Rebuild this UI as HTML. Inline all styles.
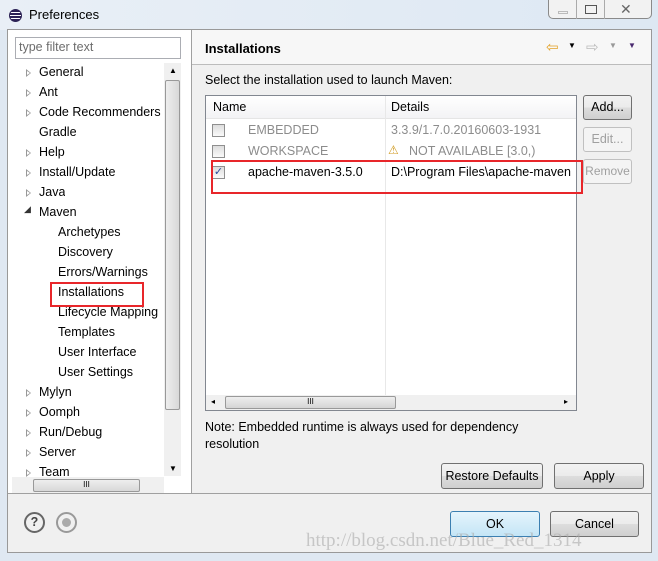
<!DOCTYPE html><html><head><style>
*{margin:0;padding:0;box-sizing:border-box}
body{width:658px;height:561px;background:#dfe8f2;font-family:"Liberation Sans",sans-serif;font-size:12.5px;color:#000;position:relative;overflow:hidden}
.a{position:absolute}
.btn{position:absolute;border:1px solid #707070;border-radius:3px;background:linear-gradient(#f2f2f2,#ebebeb 50%,#dddddd 51%,#cfcfcf);text-align:center;font-size:12.5px}
.dis{color:#a0a0a0;border-color:#c0c0c0;background:#f4f4f4}
.tri{position:absolute;width:0;height:0;border-left:5px solid #999;border-top:4px solid transparent;border-bottom:4px solid transparent}
.tri:after{content:"";position:absolute;left:-4px;top:-2px;border-left:3px solid #fff;border-top:2px solid transparent;border-bottom:2px solid transparent}
.cb{position:absolute;width:13px;height:13px;border:1px solid #8f8f8f;background:linear-gradient(#ddd,#fafafa)}
</style></head><body>
<div class="a" style="left:0;top:0;width:658px;height:30px;background:linear-gradient(90deg,#e9eff6,#dde8f3)"></div>
<div class="a" style="left:9px;top:9px;width:13px;height:13px;border-radius:50%;background:repeating-linear-gradient(#2c2255 0 2px,#fff 2px 3px);border:1px solid #2c2255"></div>
<div class="a" style="left:29px;top:7px;font-size:13px">Preferences</div>
<div class="a" style="left:548px;top:0;width:104px;height:19px;border:1px solid #8a8a8a;border-top:none;border-radius:0 0 5px 5px;background:#f2f2f2"></div>
<div class="a" style="left:576px;top:0;width:1px;height:19px;background:#aaa"></div>
<div class="a" style="left:604px;top:0;width:1px;height:19px;background:#aaa"></div>
<div class="a" style="left:558px;top:11px;width:10px;height:3px;border:1px solid #bbb"></div>
<div class="a" style="left:585px;top:5px;width:12px;height:9px;border:1px solid #555"></div>
<div class="a" style="left:620px;top:1px;font-size:14px;color:#666">✕</div>
<div class="a" style="left:7px;top:29px;width:645px;height:524px;background:#f0f0f0;border:1px solid #999"></div>
<div class="a" style="left:8px;top:30px;width:183px;height:463px;background:#fff"></div>
<div class="a" style="left:191px;top:30px;width:1px;height:464px;background:#a0a0a0"></div>
<div class="a" style="left:8px;top:493px;width:643px;height:1px;background:#a0a0a0"></div>
<div class="a" style="left:15px;top:37px;width:166px;height:22px;border:1px solid #abadb3;color:#6d6d6d;padding:2px 3px">type filter text</div>
<div class="a" style="left:164px;top:63px;width:17px;height:413px;background:#f0f0f0"></div>
<div class="a" style="left:165px;top:80px;width:15px;height:330px;border:1px solid #999;border-radius:2px;background:linear-gradient(90deg,#eee,#d8d8d8)"></div>
<div class="a" style="left:169px;top:66px;font-size:8px">▲</div>
<div class="a" style="left:169px;top:464px;font-size:8px">▼</div>
<div class="a" style="left:12px;top:477px;width:152px;height:16px;background:#f0f0f0"></div>
<div class="a" style="left:33px;top:479px;width:107px;height:13px;border:1px solid #999;border-radius:2px;background:linear-gradient(#eee,#d8d8d8);font-size:8px;text-align:center">III</div>
<div id="tree"></div>
<div class="a" style="left:50px;top:282px;width:94px;height:25px;border:2px solid #e8262a"></div>
<div class="a" style="left:192px;top:30px;width:459px;height:35px;background:#f7f7f7;border-bottom:1px solid #bcbcbc"></div>
<div class="a" style="left:205px;top:41px;font-weight:bold;font-size:13px">Installations</div>
<div class="a" style="left:546px;top:38px;color:#e3a22a;font-size:15px">⇦</div>
<div class="a" style="left:568px;top:41px;font-size:8px">▼</div>
<div class="a" style="left:586px;top:38px;color:#bbb;font-size:15px">⇨</div>
<div class="a" style="left:609px;top:41px;font-size:8px;color:#999">▼</div>
<div class="a" style="left:628px;top:41px;font-size:8px;color:#4a2a70">▼</div>
<div class="a" style="left:205px;top:73px">Select the installation used to launch Maven:</div>
<div class="a" style="left:205px;top:95px;width:372px;height:316px;border:1px solid #828790;background:#fff"></div>
<div class="a" style="left:206px;top:96px;width:370px;height:23px;background:linear-gradient(#fff,#f3f3f5);border-bottom:1px solid #e5e5e5"></div>
<div class="a" style="left:385px;top:96px;width:1px;height:299px;background:#e8e8e8"></div>
<div class="a" style="left:213px;top:100px">Name</div><div class="a" style="left:391px;top:100px">Details</div>
<div class="cb" style="left:212px;top:124px"></div><div class="a" style="left:248px;top:123px;color:#8c8c8c">EMBEDDED</div><div class="a" style="left:391px;top:123px;color:#8c8c8c">3.3.9/1.7.0.20160603-1931</div>
<div class="cb" style="left:212px;top:145px"></div><div class="a" style="left:248px;top:144px;color:#8c8c8c">WORKSPACE</div><div class="a" style="left:388px;top:143px;color:#d09a20;font-size:12px">⚠</div><div class="a" style="left:409px;top:144px;color:#8c8c8c">NOT AVAILABLE [3.0,)</div>
<div class="cb" style="left:212px;top:166px;color:#2a4a9a;font-size:11px;line-height:11px;text-align:center">✓</div><div class="a" style="left:248px;top:165px">apache-maven-3.5.0</div><div class="a" style="left:391px;top:165px;width:185px;overflow:hidden;white-space:nowrap">D:\Program Files\apache-maven</div>
<div class="a" style="left:211px;top:160px;width:372px;height:34px;border:2px solid #e8262a"></div>
<div class="a" style="left:206px;top:395px;width:370px;height:15px;background:#f0f0f0"></div>
<div class="a" style="left:225px;top:396px;width:171px;height:13px;border:1px solid #999;border-radius:2px;background:linear-gradient(#eee,#d5d5d5);font-size:8px;text-align:center">III</div>
<div class="a" style="left:211px;top:397px;font-size:8px">◂</div><div class="a" style="left:564px;top:397px;font-size:8px">▸</div>
<div class="btn" style="left:583px;top:95px;width:49px;height:25px;line-height:23px">Add...</div>
<div class="btn dis" style="left:583px;top:127px;width:49px;height:25px;line-height:23px">Edit...</div>
<div class="btn dis" style="left:583px;top:159px;width:49px;height:25px;line-height:23px;font-size:12px">Remove</div>
<div class="a" style="left:205px;top:419px;line-height:17px">Note: Embedded runtime is always used for dependency<br>resolution</div>
<div class="btn" style="left:441px;top:463px;width:102px;height:26px;line-height:24px">Restore Defaults</div>
<div class="btn" style="left:554px;top:463px;width:90px;height:26px;line-height:24px">Apply</div>
<div class="btn" style="left:450px;top:511px;width:90px;height:26px;line-height:24px;border-color:#3c7fb1;background:linear-gradient(#e5f4fc,#c4e5f6)">OK</div>
<div class="btn" style="left:550px;top:511px;width:89px;height:26px;line-height:24px">Cancel</div>
<div class="a" style="left:24px;top:512px;width:21px;height:21px;border:2px solid #666;border-radius:50%;text-align:center;font-weight:bold;color:#444;line-height:17px">?</div>
<div class="a" style="left:56px;top:512px;width:21px;height:21px;border:2px solid #999;border-radius:50%"></div>
<div class="a" style="left:62px;top:518px;width:9px;height:9px;border-radius:50%;background:#aaa"></div>
<div class="a" style="left:306px;top:530px;font-family:'Liberation Serif',serif;font-size:19px;color:rgba(170,170,170,.6)">http://blog.csdn.net/Blue_Red_1314</div>
<script>
var items=[["General",1,0],["Ant",1,0],["Code Recommenders",1,0],["Gradle",0,0],["Help",1,0],["Install/Update",1,0],["Java",1,0],["Maven",2,0],["Archetypes",0,1],["Discovery",0,1],["Errors/Warnings",0,1],["Installations",0,1],["Lifecycle Mapping",0,1],["Templates",0,1],["User Interface",0,1],["User Settings",0,1],["Mylyn",1,0],["Oomph",1,0],["Run/Debug",1,0],["Server",1,0],["Team",1,0]];
var h="";items.forEach(function(it,i){var y=65+i*20;var x=it[2]?58:39;
if(it[1]==1)h+='<div class="tri" style="left:26px;top:'+(y+4)+'px"></div>';
if(it[1]==2)h+='<div class="a" style="left:24px;top:'+(y-1)+'px;font-size:9px;color:#333">◢</div>';
h+='<div class="a" style="left:'+x+'px;top:'+y+'px;white-space:nowrap;max-width:'+(164-x)+'px;overflow:hidden">'+it[0]+'</div>';});
document.getElementById("tree").innerHTML=h;
</script>
</body></html>
